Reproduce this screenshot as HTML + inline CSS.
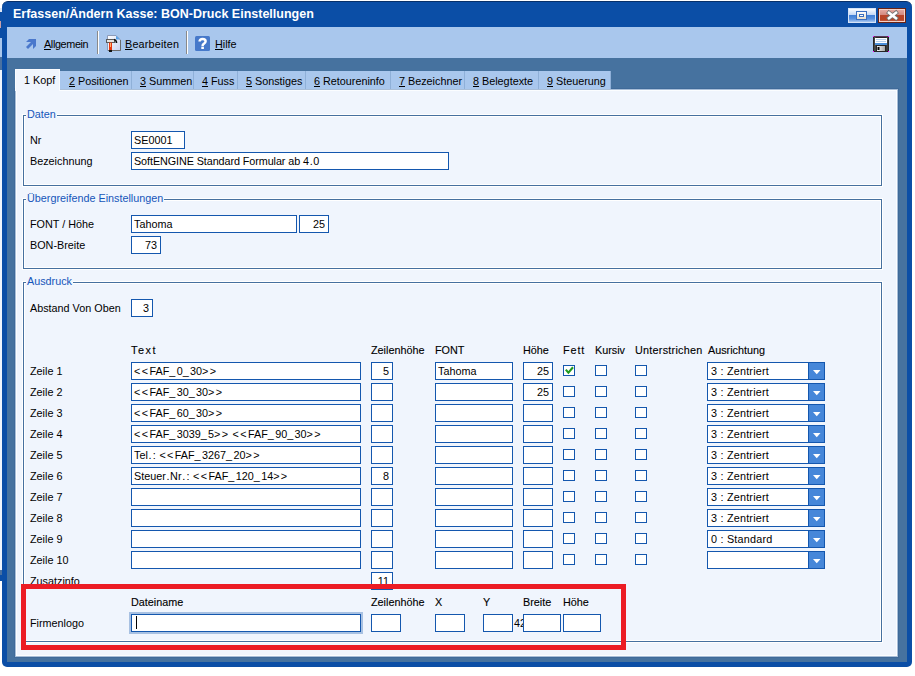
<!DOCTYPE html>
<html><head><meta charset="utf-8"><style>
*{box-sizing:border-box;margin:0;padding:0}
html,body{width:915px;height:676px;background:#fff;overflow:hidden;position:relative;font-family:"Liberation Sans",sans-serif;font-size:10.8px;color:#000}
div{position:absolute}
.win{left:2px;top:1px;width:910px;height:666px;background:#0b4ea6;border-radius:6px 6px 5px 5px;border-top:1px solid #07306a}
.title{left:13px;top:7px;color:#fff;font-weight:bold;font-size:12.5px;white-space:nowrap}
.tbtn{top:8px;width:28px;height:14px;border-radius:2px}
.toolbar{left:7px;top:27px;width:900px;height:31px;background:#a9c7ed}
.band{left:7px;top:58px;width:900px;height:604px;background:#46729f}
.panel{left:15px;top:89px;width:883px;height:568px;background:#f0f5fd;border:1px solid #a8bed8;box-shadow:inset 0 0 0 1px #fbfdff,0 0 0 1px #3f6a99}
.tab{top:71px;height:18px;background:#a9c7ed;border-right:1px solid #8fb0d8;white-space:nowrap;font-size:10.8px}
.tab span{position:absolute;left:8px;top:4px}
.tab.act{top:69px;height:22px;background:#f0f5fd;border-right:1px solid #fafcff;border-top:1px solid #fafcff;border-left:1px solid #fafcff}
.tab.act span{left:8px;top:4px}
.tab u{text-decoration:underline}
.gb{border:1px solid #46709f;box-shadow:0 0 0 1px #fff,inset 0 0 0 1px #fff}
.gt{color:#1656ba;background:#f0f5fd;white-space:nowrap}
.lb,.hd{white-space:nowrap;color:#000}
.hd{-webkit-text-stroke:0.12px #000}
i.w{font-style:normal;letter-spacing:1.4px}
i.p{font-style:normal;padding:0 0.65px}
.tight{letter-spacing:-0.08px}
.in{background:#fff;border:1px solid #1457ae;overflow:hidden;white-space:nowrap}
.in .l{position:absolute;left:2px;top:2px}
.in .r{position:absolute;right:3px;top:2px}
.cb{width:12px;height:11px;background:#fff;border:1px solid #1457ae}
.cbtn{right:0;top:0;width:16px;height:16px;background:#4687d9;border-left:1px solid #1457ae}
.focus{box-shadow:0 0 0 2px #a8c1e2}
.caret{left:4px;top:1px;width:1px;height:13px;background:#000}
.red{left:21px;top:584px;width:605px;height:66px;border:5px solid #ec1c24}
.sep{top:31px;width:2px;height:23px;border-left:1px solid #8a8a8a;border-right:1px solid #fff}
.tbt{top:38px;white-space:nowrap;font-size:10.8px}
.tbt u{text-decoration:underline}
</style></head><body>
<div style="left:0;top:8px;width:2px;height:4px;background:#dfe8f6"></div>
<div style="left:0;top:12px;width:2px;height:26px;background:#0b4ea6"></div>
<div style="left:0;top:21px;width:1px;height:7px;background:#c8a0a8"></div>
<div style="left:0;top:38px;width:2px;height:19px;background:#a9c7ed"></div>
<div style="left:0;top:57px;width:2px;height:13px;background:#4a71a0"></div>
<div style="left:0;top:70px;width:2px;height:500px;background:#f0f5fd"></div>
<div style="left:0;top:570px;width:2px;height:5px;background:#4a71a0"></div>
<div style="left:0;top:575px;width:2px;height:6px;background:#0b4ea6"></div>
<div class="win"></div>
<div class="title">Erfassen/Ändern Kasse: BON-Druck Einstellungen</div>
<svg style="position:absolute;left:848px;top:8px" width="58" height="15"><defs>
<linearGradient id="rg" x1="0" y1="0" x2="0" y2="1"><stop offset="0" stop-color="#ffffff"/><stop offset="0.45" stop-color="#c4d8f6"/><stop offset="0.47" stop-color="#3f7ed6"/><stop offset="0.75" stop-color="#5a92e0"/><stop offset="1" stop-color="#b8d2f4"/></linearGradient>
<linearGradient id="cg" x1="0" y1="0" x2="0" y2="1"><stop offset="0" stop-color="#e8b0a8"/><stop offset="0.45" stop-color="#d48a80"/><stop offset="0.47" stop-color="#b8442a"/><stop offset="0.8" stop-color="#b84424"/><stop offset="1" stop-color="#d07060"/></linearGradient>
<linearGradient id="ig" x1="0" y1="0" x2="0" y2="1"><stop offset="0" stop-color="#ffffff"/><stop offset="1" stop-color="#e6dccb"/></linearGradient></defs>
<rect x="0.5" y="0.5" width="27" height="14" fill="url(#rg)" stroke="#d6e4f8"/>
<rect x="8.5" y="3.5" width="10" height="8" fill="url(#ig)" stroke="#3b6fc0"/>
<rect x="11.5" y="6.5" width="4" height="2" fill="#fff" stroke="#3b6fc0"/>
<rect x="30.5" y="0.5" width="27" height="14" fill="url(#cg)" stroke="#6b2414"/>
<rect x="31.5" y="1.5" width="25" height="12" fill="none" stroke="#f6d2c8"/>
<path d="M41 4.8 L48 10.2 M48 4.8 L41 10.2" stroke="#707070" stroke-width="4.2" stroke-linecap="square"/>
<path d="M41 4.8 L48 10.2 M48 4.8 L41 10.2" stroke="#fff" stroke-width="2.6" stroke-linecap="square"/>
</svg>
<div class="toolbar"></div>
<div class="band"></div>
<svg style="position:absolute;left:20px;top:33px" width="20" height="20"><path d="M6 9 L9 6 L16 6 L16 13 L13 16 L13 9 Z" fill="#4a78cc"/><path d="M7 15 L13.5 8.5" stroke="#4a78cc" stroke-width="2.8"/></svg>
<div class="tbt" style="left:44px;letter-spacing:-0.35px"><u>A</u>llgemein</div>
<div class="sep" style="left:97px"></div>
<svg style="position:absolute;left:105px;top:34px" width="17" height="19"><defs><linearGradient id="dg" x1="0" y1="0" x2="1" y2="1"><stop offset="0" stop-color="#ffffff"/><stop offset="1" stop-color="#c9d3f2"/></linearGradient></defs><path d="M2.5 1.5 H11 L15.5 6 V16.5 H2.5 Z" fill="url(#dg)" stroke="#8c9bb8"/><path d="M15.5 6 V16.5 H3" fill="none" stroke="#6b6b6b"/><path d="M11 1.5 L15 5.5 L11 5.5 Z" fill="#5aa2e6"/><rect x="1.5" y="5.5" width="8" height="3" fill="#e4e4e4" stroke="#5a5a5a"/><path d="M9 5.5 Q11.5 6 11.5 9" stroke="#111" stroke-width="1.6" fill="none"/><rect x="4" y="8.5" width="3" height="8" fill="#e8380f"/><rect x="4" y="16" width="3" height="2" fill="#111"/><rect x="5" y="9" width="1" height="4" fill="#ffb070"/></svg>
<div class="tbt" style="left:125px;letter-spacing:0.2px"><u>B</u>earbeiten</div>
<div class="sep" style="left:186px"></div>
<svg style="position:absolute;left:195px;top:36px" width="15" height="15"><rect x="0" y="0" width="15" height="15" rx="1.5" fill="#4679ca"/><path d="M4.6 5.6 Q4.6 2.9 7.6 2.9 Q10.6 2.9 10.6 5.3 Q10.6 6.9 8.8 7.8 Q7.6 8.4 7.6 9.9" stroke="#fff" stroke-width="2.5" fill="none"/><rect x="6.3" y="10.6" width="2.6" height="2.4" fill="#fff"/></svg>
<div class="tbt" style="left:215px"><u>H</u>ilfe</div>
<svg style="position:absolute;left:873px;top:36px" width="16" height="16"><defs><linearGradient id="sg" x1="0" y1="0" x2="1" y2="0"><stop offset="0" stop-color="#f4f4f4"/><stop offset="1" stop-color="#a8a8a8"/></linearGradient></defs><rect x="0" y="0" width="16" height="16" fill="#262626"/><rect x="1" y="1" width="2" height="14" fill="#444"/><rect x="13" y="1" width="2" height="14" fill="#3a3a3a"/><rect x="0" y="0" width="16" height="1" fill="#5a3a5a"/><rect x="2" y="2" width="12" height="5" fill="#fff"/><rect x="3" y="3" width="10" height="1" fill="#b8d2ec"/><rect x="3" y="5" width="10" height="1" fill="#b8d2ec"/><rect x="2" y="7" width="12" height="2" fill="#4b8fd8"/><rect x="4" y="10" width="8" height="5" fill="url(#sg)"/><rect x="4.5" y="11" width="2" height="3" fill="#000"/><rect x="0" y="0" width="1" height="1" fill="#f0f"/><rect x="15" y="0" width="1" height="1" fill="#f0f"/><rect x="0" y="15" width="1" height="1" fill="#f0f"/><rect x="15" y="15" width="1" height="1" fill="#f0f"/></svg>
<div class="panel">
</div>
<div class="tab act" style="left:15px;width:45px"><span>1 Kopf</span></div>
<div class="tab" style="left:60px;width:72px"><span style="left:9px"><u>2</u> Positionen</span></div>
<div class="tab" style="left:132px;width:62px"><span style="left:8px"><u>3</u> Summen</span></div>
<div class="tab" style="left:194px;width:44px"><span style="left:8px"><u>4</u> Fuss</span></div>
<div class="tab" style="left:238px;width:68px"><span style="left:8px"><u>5</u> Sonstiges</span></div>
<div class="tab" style="left:306px;width:85px"><span style="left:8px"><u>6</u> Retoureninfo</span></div>
<div class="tab" style="left:391px;width:74px"><span style="left:8px"><u>7</u> Bezeichner</span></div>
<div class="tab" style="left:465px;width:74px"><span style="left:8px"><u>8</u> Belegtexte</span></div>
<div class="tab" style="left:539px;width:72px"><span style="left:8px"><u>9</u> Steuerung</span></div>
<div style="left:0;top:0;width:915px;height:676px">
<div class="gb" style="left:23px;top:115px;width:859px;height:71px"></div>
<div class="gt" style="left:26px;top:108px;padding:0 1px">Daten</div>
<div class="lb" style="left:30px;top:134px">Nr</div>
<div class="in" style="left:131px;top:131px;width:54px;height:18px"><span class="l">SE0001</span></div>
<div class="lb" style="left:30px;top:155px">Bezeichnung</div>
<div class="in" style="left:131px;top:152px;width:318px;height:18px"><span class="l tight">SoftENGINE Standard Formular ab 4<i class="p">.</i>0</span></div>
<div class="gb" style="left:23px;top:199px;width:859px;height:70px"></div>
<div class="gt" style="left:26px;top:192px;padding:0 1px">Übergreifende Einstellungen</div>
<div class="lb" style="left:30px;top:218px">FONT / Höhe</div>
<div class="in" style="left:131px;top:215px;width:166px;height:18px"><span class="l">Tahoma</span></div>
<div class="in" style="left:299px;top:215px;width:30px;height:18px"><span class="r">25</span></div>
<div class="lb" style="left:30px;top:239px">BON-Breite</div>
<div class="in" style="left:131px;top:236px;width:30px;height:18px"><span class="r">73</span></div>
<div class="gb" style="left:23px;top:282px;width:859px;height:360px"></div>
<div class="gt" style="left:26px;top:275px;padding:0 1px">Ausdruck</div>
<div class="lb" style="left:30px;top:302px">Abstand Von Oben</div>
<div class="in" style="left:131px;top:299px;width:22px;height:18px"><span class="r">3</span></div>
<div class="hd" style="left:131px;top:344px;letter-spacing:1.6px">Text</div>
<div class="hd" style="left:371px;top:344px">Zeilenhöhe</div>
<div class="hd" style="left:435px;top:344px">FONT</div>
<div class="hd" style="left:523px;top:344px">Höhe</div>
<div class="hd" style="left:563px;top:344px;letter-spacing:0.9px">Fett</div>
<div class="hd" style="left:595px;top:344px">Kursiv</div>
<div class="hd" style="left:635px;top:344px;letter-spacing:0.25px">Unterstrichen</div>
<div class="hd" style="left:708px;top:344px">Ausrichtung</div>
<div class="lb" style="left:30px;top:365px">Zeile 1</div>
<div class="in" style="left:131px;top:362px;width:230px;height:18px"><span class="l"><i class="w">&lt;</i><i class="w">&lt;</i>FAF<i class="w">_</i>0<i class="w">_</i>30<i class="w">&gt;</i><i class="w">&gt;</i></span></div>
<div class="in" style="left:371px;top:362px;width:22px;height:18px"><span class="r">5</span></div>
<div class="in" style="left:435px;top:362px;width:78px;height:18px"><span class="l">Tahoma</span></div>
<div class="in" style="left:523px;top:362px;width:30px;height:18px"><span class="r">25</span></div>
<div class="cb" style="left:563px;top:365px"><svg width="12" height="11" style="position:absolute;left:0;top:0"><path d="M1.8 3.6 L4.4 6.6 L9 1.2" stroke="#1f9a1f" stroke-width="2.1" fill="none"/></svg></div>
<div class="cb" style="left:595px;top:365px"></div>
<div class="cb" style="left:635px;top:365px"></div>
<div class="in" style="left:707px;top:362px;width:118px;height:18px"><span class="l" style="left:3px;letter-spacing:0.22px">3 : Zentriert</span><div class="cbtn"><svg width="8" height="5" style="position:absolute;left:3.8px;top:7px"><path d="M0 0 L7.5 0 L3.75 4.3 Z" fill="#fff"/></svg></div></div>
<div class="lb" style="left:30px;top:386px">Zeile 2</div>
<div class="in" style="left:131px;top:383px;width:230px;height:18px"><span class="l"><i class="w">&lt;</i><i class="w">&lt;</i>FAF<i class="w">_</i>30<i class="w">_</i>30<i class="w">&gt;</i><i class="w">&gt;</i></span></div>
<div class="in" style="left:371px;top:383px;width:22px;height:18px"></div>
<div class="in" style="left:435px;top:383px;width:78px;height:18px"></div>
<div class="in" style="left:523px;top:383px;width:30px;height:18px"><span class="r">25</span></div>
<div class="cb" style="left:563px;top:386px"></div>
<div class="cb" style="left:595px;top:386px"></div>
<div class="cb" style="left:635px;top:386px"></div>
<div class="in" style="left:707px;top:383px;width:118px;height:18px"><span class="l" style="left:3px;letter-spacing:0.22px">3 : Zentriert</span><div class="cbtn"><svg width="8" height="5" style="position:absolute;left:3.8px;top:7px"><path d="M0 0 L7.5 0 L3.75 4.3 Z" fill="#fff"/></svg></div></div>
<div class="lb" style="left:30px;top:407px">Zeile 3</div>
<div class="in" style="left:131px;top:404px;width:230px;height:18px"><span class="l"><i class="w">&lt;</i><i class="w">&lt;</i>FAF<i class="w">_</i>60<i class="w">_</i>30<i class="w">&gt;</i><i class="w">&gt;</i></span></div>
<div class="in" style="left:371px;top:404px;width:22px;height:18px"></div>
<div class="in" style="left:435px;top:404px;width:78px;height:18px"></div>
<div class="in" style="left:523px;top:404px;width:30px;height:18px"></div>
<div class="cb" style="left:563px;top:407px"></div>
<div class="cb" style="left:595px;top:407px"></div>
<div class="cb" style="left:635px;top:407px"></div>
<div class="in" style="left:707px;top:404px;width:118px;height:18px"><span class="l" style="left:3px;letter-spacing:0.22px">3 : Zentriert</span><div class="cbtn"><svg width="8" height="5" style="position:absolute;left:3.8px;top:7px"><path d="M0 0 L7.5 0 L3.75 4.3 Z" fill="#fff"/></svg></div></div>
<div class="lb" style="left:30px;top:428px">Zeile 4</div>
<div class="in" style="left:131px;top:425px;width:230px;height:18px"><span class="l"><i class="w">&lt;</i><i class="w">&lt;</i>FAF<i class="w">_</i>3039<i class="w">_</i>5<i class="w">&gt;</i><i class="w">&gt;</i> <i class="w">&lt;</i><i class="w">&lt;</i>FAF<i class="w">_</i>90<i class="w">_</i>30<i class="w">&gt;</i><i class="w">&gt;</i></span></div>
<div class="in" style="left:371px;top:425px;width:22px;height:18px"></div>
<div class="in" style="left:435px;top:425px;width:78px;height:18px"></div>
<div class="in" style="left:523px;top:425px;width:30px;height:18px"></div>
<div class="cb" style="left:563px;top:428px"></div>
<div class="cb" style="left:595px;top:428px"></div>
<div class="cb" style="left:635px;top:428px"></div>
<div class="in" style="left:707px;top:425px;width:118px;height:18px"><span class="l" style="left:3px;letter-spacing:0.22px">3 : Zentriert</span><div class="cbtn"><svg width="8" height="5" style="position:absolute;left:3.8px;top:7px"><path d="M0 0 L7.5 0 L3.75 4.3 Z" fill="#fff"/></svg></div></div>
<div class="lb" style="left:30px;top:449px">Zeile 5</div>
<div class="in" style="left:131px;top:446px;width:230px;height:18px"><span class="l">Tel<i class="p">.</i><i class="p">:</i> <i class="w">&lt;</i><i class="w">&lt;</i>FAF<i class="w">_</i>3267<i class="w">_</i>20<i class="w">&gt;</i><i class="w">&gt;</i></span></div>
<div class="in" style="left:371px;top:446px;width:22px;height:18px"></div>
<div class="in" style="left:435px;top:446px;width:78px;height:18px"></div>
<div class="in" style="left:523px;top:446px;width:30px;height:18px"></div>
<div class="cb" style="left:563px;top:449px"></div>
<div class="cb" style="left:595px;top:449px"></div>
<div class="cb" style="left:635px;top:449px"></div>
<div class="in" style="left:707px;top:446px;width:118px;height:18px"><span class="l" style="left:3px;letter-spacing:0.22px">3 : Zentriert</span><div class="cbtn"><svg width="8" height="5" style="position:absolute;left:3.8px;top:7px"><path d="M0 0 L7.5 0 L3.75 4.3 Z" fill="#fff"/></svg></div></div>
<div class="lb" style="left:30px;top:470px">Zeile 6</div>
<div class="in" style="left:131px;top:467px;width:230px;height:18px"><span class="l">Steuer<i class="p">.</i>Nr<i class="p">.</i><i class="p">:</i> <i class="w">&lt;</i><i class="w">&lt;</i>FAF<i class="w">_</i>120<i class="w">_</i>14<i class="w">&gt;</i><i class="w">&gt;</i></span></div>
<div class="in" style="left:371px;top:467px;width:22px;height:18px"><span class="r">8</span></div>
<div class="in" style="left:435px;top:467px;width:78px;height:18px"></div>
<div class="in" style="left:523px;top:467px;width:30px;height:18px"></div>
<div class="cb" style="left:563px;top:470px"></div>
<div class="cb" style="left:595px;top:470px"></div>
<div class="cb" style="left:635px;top:470px"></div>
<div class="in" style="left:707px;top:467px;width:118px;height:18px"><span class="l" style="left:3px;letter-spacing:0.22px">3 : Zentriert</span><div class="cbtn"><svg width="8" height="5" style="position:absolute;left:3.8px;top:7px"><path d="M0 0 L7.5 0 L3.75 4.3 Z" fill="#fff"/></svg></div></div>
<div class="lb" style="left:30px;top:491px">Zeile 7</div>
<div class="in" style="left:131px;top:488px;width:230px;height:18px"></div>
<div class="in" style="left:371px;top:488px;width:22px;height:18px"></div>
<div class="in" style="left:435px;top:488px;width:78px;height:18px"></div>
<div class="in" style="left:523px;top:488px;width:30px;height:18px"></div>
<div class="cb" style="left:563px;top:491px"></div>
<div class="cb" style="left:595px;top:491px"></div>
<div class="cb" style="left:635px;top:491px"></div>
<div class="in" style="left:707px;top:488px;width:118px;height:18px"><span class="l" style="left:3px;letter-spacing:0.22px">3 : Zentriert</span><div class="cbtn"><svg width="8" height="5" style="position:absolute;left:3.8px;top:7px"><path d="M0 0 L7.5 0 L3.75 4.3 Z" fill="#fff"/></svg></div></div>
<div class="lb" style="left:30px;top:512px">Zeile 8</div>
<div class="in" style="left:131px;top:509px;width:230px;height:18px"></div>
<div class="in" style="left:371px;top:509px;width:22px;height:18px"></div>
<div class="in" style="left:435px;top:509px;width:78px;height:18px"></div>
<div class="in" style="left:523px;top:509px;width:30px;height:18px"></div>
<div class="cb" style="left:563px;top:512px"></div>
<div class="cb" style="left:595px;top:512px"></div>
<div class="cb" style="left:635px;top:512px"></div>
<div class="in" style="left:707px;top:509px;width:118px;height:18px"><span class="l" style="left:3px;letter-spacing:0.22px">3 : Zentriert</span><div class="cbtn"><svg width="8" height="5" style="position:absolute;left:3.8px;top:7px"><path d="M0 0 L7.5 0 L3.75 4.3 Z" fill="#fff"/></svg></div></div>
<div class="lb" style="left:30px;top:533px">Zeile 9</div>
<div class="in" style="left:131px;top:530px;width:230px;height:18px"></div>
<div class="in" style="left:371px;top:530px;width:22px;height:18px"></div>
<div class="in" style="left:435px;top:530px;width:78px;height:18px"></div>
<div class="in" style="left:523px;top:530px;width:30px;height:18px"></div>
<div class="cb" style="left:563px;top:533px"></div>
<div class="cb" style="left:595px;top:533px"></div>
<div class="cb" style="left:635px;top:533px"></div>
<div class="in" style="left:707px;top:530px;width:118px;height:18px"><span class="l" style="left:3px;letter-spacing:0.22px">0 : Standard</span><div class="cbtn"><svg width="8" height="5" style="position:absolute;left:3.8px;top:7px"><path d="M0 0 L7.5 0 L3.75 4.3 Z" fill="#fff"/></svg></div></div>
<div class="lb" style="left:30px;top:554px">Zeile 10</div>
<div class="in" style="left:131px;top:551px;width:230px;height:18px"></div>
<div class="in" style="left:371px;top:551px;width:22px;height:18px"></div>
<div class="in" style="left:435px;top:551px;width:78px;height:18px"></div>
<div class="in" style="left:523px;top:551px;width:30px;height:18px"></div>
<div class="cb" style="left:563px;top:554px"></div>
<div class="cb" style="left:595px;top:554px"></div>
<div class="cb" style="left:635px;top:554px"></div>
<div class="in" style="left:707px;top:551px;width:118px;height:18px"><div class="cbtn"><svg width="8" height="5" style="position:absolute;left:3.8px;top:7px"><path d="M0 0 L7.5 0 L3.75 4.3 Z" fill="#fff"/></svg></div></div>
<div class="lb" style="left:30px;top:575px">Zusatzinfo</div>
<div class="in" style="left:371px;top:572px;width:22px;height:18px"><span class="r">11</span></div>
<div class="hd" style="left:131px;top:596px">Dateiname</div>
<div class="hd" style="left:371px;top:596px">Zeilenhöhe</div>
<div class="hd" style="left:435px;top:596px">X</div>
<div class="hd" style="left:483px;top:596px">Y</div>
<div class="hd" style="left:523px;top:596px">Breite</div>
<div class="hd" style="left:563px;top:596px">Höhe</div>
<div class="lb" style="left:30px;top:617px">Firmenlogo</div>
<div class="lb" style="left:514px;top:617px">42</div>
<div class="in focus" style="left:131px;top:614px;width:230px;height:18px"><div class="caret"></div></div>
<div class="in" style="left:371px;top:614px;width:30px;height:18px"></div>
<div class="in" style="left:435px;top:614px;width:30px;height:18px"></div>
<div class="in" style="left:483px;top:614px;width:30px;height:18px"></div>
<div class="in" style="left:523px;top:614px;width:38px;height:18px"></div>
<div class="in" style="left:563px;top:614px;width:38px;height:18px"></div>
<div class="red"></div>
</div>
</body></html>
